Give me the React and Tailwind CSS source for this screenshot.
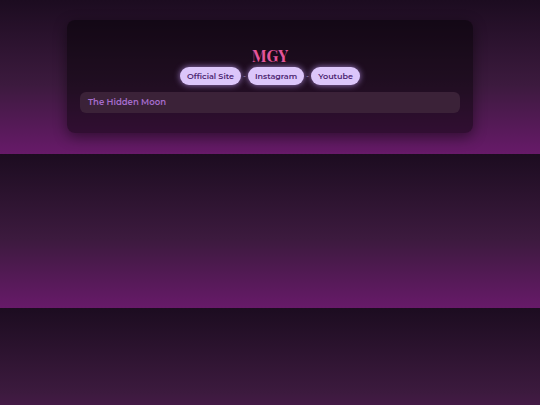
export default function App() {
  const links = ["Official Site", "Instagram", "Youtube"];
  return (
    <div
      className="min-h-screen w-full bg-[linear-gradient(180deg,#1c0c20_0%,#3c1a3e_55%,#671a69_100%)] bg-[length:100%_154px] bg-repeat"
      style={{ fontFamily: "Montserrat, 'DejaVu Sans', sans-serif" }}
    >
      <div className="pt-5 pb-5">
        <div className="mx-auto w-[406px] rounded-lg bg-black/45 shadow-[0_4px_14px_rgba(0,0,0,0.45)] px-[13px] pt-[28px] pb-[20px]">
          <div
            className="text-center text-[16px] leading-[16px] font-bold text-[#e5559a]"
            style={{ fontFamily: "'Playfair Display', 'Liberation Serif', serif" }}
          >
            MGY
          </div>
          <div className="mt-[3px] flex items-center justify-center gap-[2px]">
            {links.map((l, i) => (
              <div key={l} className="flex items-center gap-[2px]">
                {i > 0 && <span className="text-[8px] text-[#b89ad0]">-</span>}
                <span className="flex h-[18px] items-center rounded-full bg-[#dcc6fa] px-[7px] text-[8px] font-semibold text-[#4b2470] shadow-[0_0_6px_rgba(200,160,255,0.75)]">
                  {l}
                </span>
              </div>
            ))}
          </div>
          <div className="mt-[7px] flex h-[21px] items-center rounded-md bg-[#3b2238] px-[8px] text-[8.5px] font-semibold text-[#a56ccb]">
            The Hidden Moon
          </div>
        </div>
      </div>
    </div>
  );
}
